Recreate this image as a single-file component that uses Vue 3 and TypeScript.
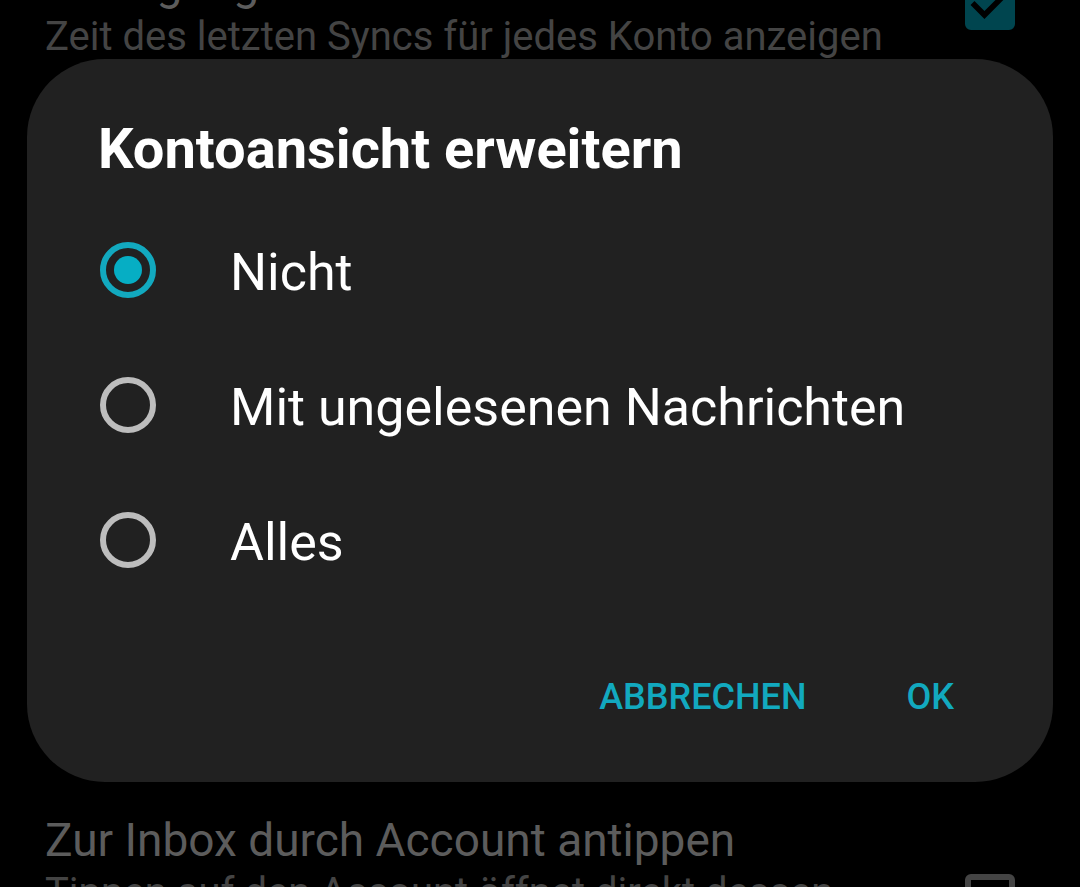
<script setup lang="ts">
import { ref } from 'vue'

interface Option {
  value: string
  label: string
}

const options: Option[] = [
  { value: 'none', label: 'Nicht' },
  { value: 'unread', label: 'Mit ungelesenen Nachrichten' },
  { value: 'all', label: 'Alles' },
]

const selected = ref('none')
const showSync = ref(true)
const openInbox = ref(false)
</script>

<template>
  <div class="screen">
    <label class="setting setting-above">
      <span class="setting-text">
        <span class="setting-title">Abfragung</span>
        <span class="setting-summary">Zeit des letzten Syncs für jedes Konto anzeigen</span>
      </span>
      <span class="check">
        <input v-model="showSync" type="checkbox" />
        <svg v-if="showSync" viewBox="3 3 18 18" aria-hidden="true">
          <path d="M10 17l-5-5 1.41-1.41L10 14.17l7.59-7.59L19 8z" />
        </svg>
      </span>
    </label>

    <section class="dialog" role="dialog" aria-labelledby="dialog-title">
      <h1 id="dialog-title">Kontoansicht erweitern</h1>
      <div class="options" role="radiogroup" aria-labelledby="dialog-title">
        <label v-for="o in options" :key="o.value" class="option">
          <input v-model="selected" type="radio" name="expand" :value="o.value" />
          <span>{{ o.label }}</span>
        </label>
      </div>
      <div class="actions">
        <button type="button">ABBRECHEN</button>
        <button type="button">OK</button>
      </div>
    </section>

    <label class="setting setting-below">
      <span class="setting-text">
        <span class="setting-title">Zur Inbox durch Account antippen</span>
        <span class="setting-summary">Tippen auf den Account öffnet direkt dessen</span>
      </span>
      <span class="check">
        <input v-model="openInbox" type="checkbox" />
      </span>
    </label>
  </div>
</template>

<style>
body {
  margin: 0;
  background: #000;
}
</style>

<style scoped>
.screen {
  display: flex;
  flex-direction: column;
  height: 100vh;
  overflow: hidden;
  background: #000;
  font-family: Roboto, "Liberation Sans", sans-serif;
}

.setting {
  display: flex;
  flex-shrink: 0;
  justify-content: space-between;
  padding: 0 65px 0 45px;
  white-space: nowrap;
}

.setting-above {
  align-items: flex-end;
  height: 59px;
  overflow: hidden;
}

.setting-above .check {
  margin-bottom: 29px;
}

.setting-below {
  align-items: flex-start;
  padding-top: 30px;
}

.setting-below .check {
  margin-top: 62px;
}

.setting-text {
  display: flex;
  flex-direction: column;
  gap: 3px;
}

.setting-title {
  font-size: 46px;
  line-height: 56px;
  color: #5c5c5c;
}

.setting-summary {
  font-size: 40px;
  line-height: 44px;
  color: #444;
}

.check {
  display: grid;
  width: 50px;
  height: 50px;
}

.check > * {
  grid-area: 1 / 1;
}

.check input {
  appearance: none;
  box-sizing: border-box;
  width: 50px;
  height: 50px;
  margin: 0;
  border: 6px solid #444;
  border-radius: 6px;
}

.check input:checked {
  border-color: #00454f;
  background: #00454f;
}

.check svg {
  width: 50px;
  height: 50px;
  fill: #000;
  pointer-events: none;
}

.dialog {
  flex-shrink: 0;
  box-sizing: border-box;
  margin: 0 27px;
  padding: 58px 71px 49px;
  border-radius: 78px;
  background: #212121;
}

h1 {
  margin: 0 0 21px;
  font-size: 56px;
  line-height: 64px;
  font-weight: 700;
  color: #fff;
}

.options {
  padding-left: 2px;
}

.option {
  display: flex;
  align-items: center;
  gap: 74px;
  height: 135px;
  font-size: 52px;
  color: #fff;
}

.option span {
  padding-top: 6px;
}

.option input {
  appearance: none;
  display: grid;
  place-items: center;
  flex-shrink: 0;
  box-sizing: border-box;
  width: 56px;
  height: 56px;
  margin: 0;
  border: 6px solid #bdbdbd;
  border-radius: 50%;
}

.option input:checked {
  border-color: #12a9bf;
}

.option input:checked::before {
  content: "";
  width: 28px;
  height: 28px;
  border-radius: 50%;
  background: #06aec4;
}

.actions {
  display: flex;
  justify-content: flex-end;
  gap: 100px;
  margin-top: 54px;
  padding-right: 28px;
}

button {
  padding: 0;
  border: 0;
  background: none;
  font-family: inherit;
  font-size: 36px;
  line-height: 72px;
  font-weight: 500;
  color: #12a9bf;
}
</style>
